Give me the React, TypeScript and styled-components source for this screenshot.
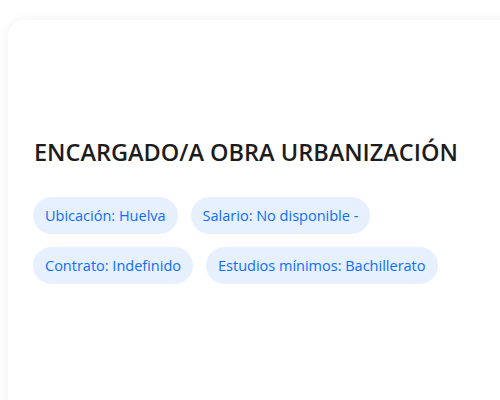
import React from "react"
import styled, { createGlobalStyle } from "styled-components"

const GlobalStyle = createGlobalStyle`
  html, body {
    margin: 0;
    padding: 0;
    background: #ffffff;
    overflow: hidden;
  }
  body {
    font-family: "Open Sans", "Noto Sans", sans-serif;
  }
`

const Page = styled.div`
  padding: 20px 0 0 8px;
  height: 400px;
  box-sizing: border-box;
  overflow: hidden;
`

const Card = styled.div`
  width: 520px;
  min-height: 420px;
  background: #ffffff;
  border-radius: 16px;
  box-shadow: 0 0 14px rgba(0, 0, 0, 0.06);
  padding: 118px 25px 26px;
  box-sizing: border-box;
`

const Title = styled.h2`
  margin: 0 0 31px 1px;
  font-size: 23.5px;
  font-weight: 600;
  line-height: 1.2;
  color: #1c1c1c;
`

const Tags = styled.div`
  display: flex;
  flex-wrap: wrap;
  column-gap: 13px;
  row-gap: 13px;
  max-width: 420px;
`

const Tag = styled.span`
  display: inline-flex;
  align-items: center;
  height: 37px;
  padding: 0 12px;
  border-radius: 19px;
  background: #e6f0ff;
  color: #0d6efd;
  font-size: 14.5px;
  font-weight: 500;
  box-sizing: border-box;
`

const tags = [
  "Ubicación: Huelva",
  "Salario: No disponible -",
  "Contrato: Indefinido",
  "Estudios mínimos: Bachillerato",
]

export default function App() {
  return (
    <Page>
      <GlobalStyle />
      <Card>
        <Title>ENCARGADO/A OBRA URBANIZACIÓN</Title>
        <Tags>
          {tags.map(t => (
            <Tag key={t}>{t}</Tag>
          ))}
        </Tags>
      </Card>
    </Page>
  )
}
